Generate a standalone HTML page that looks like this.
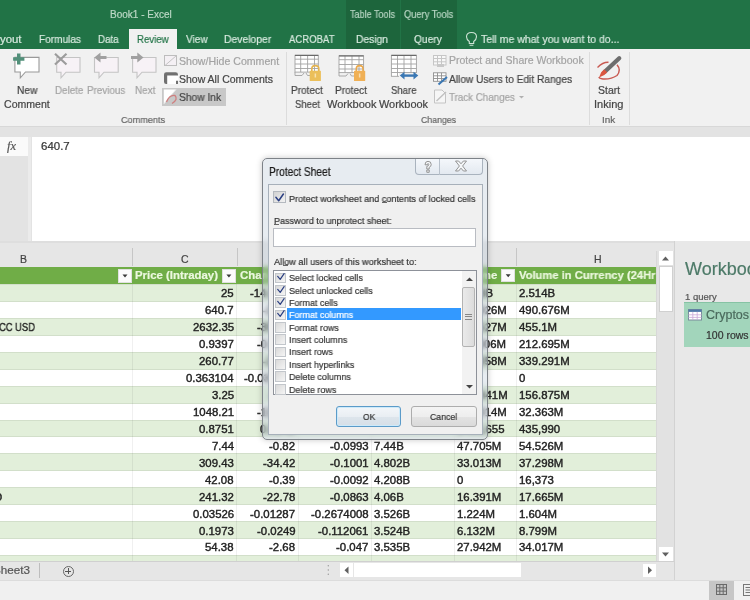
<!DOCTYPE html>
<html><head><meta charset="utf-8">
<style>
*{margin:0;padding:0;box-sizing:border-box}
html,body{width:750px;height:600px;overflow:hidden;background:#f0f0f0;font-family:"Liberation Sans",sans-serif;color:#444;position:relative}
.a{position:absolute;white-space:nowrap;will-change:transform;-webkit-text-stroke-width:0.2px}
.b{position:absolute}
</style></head><body>
<!-- title bar -->
<div class="b" style="left:0;top:0;width:750px;height:49px;background:#217346"></div>
<div class="b" style="left:345.5px;top:0;width:54px;height:49px;background:#1d653c"></div>
<div class="b" style="left:400.5px;top:0;width:56.5px;height:49px;background:#1d653c"></div>
<div class="b" style="left:129px;top:28.8px;width:47.6px;height:20.2px;background:#f1f1f1"></div>
<!-- ribbon -->
<div class="b" style="left:0;top:49px;width:750px;height:78px;background:#f1f1f1;border-bottom:1px solid #d8d8d8"></div>
<div class="b" style="left:285.6px;top:52px;width:1px;height:73px;background:#dcdcdc"></div>
<div class="b" style="left:589.2px;top:52px;width:1px;height:73px;background:#dcdcdc"></div>
<div class="b" style="left:628.7px;top:52px;width:1px;height:73px;background:#dcdcdc"></div>
<div class="b" style="left:162px;top:88px;width:64px;height:17.6px;background:#c8c8c8"></div>

<!-- ribbon icons -->
<svg class="b" style="left:0;top:49px" width="750" height="78" viewBox="0 49 750 78">
 <!-- New Comment -->
 <path d="M14.9 57.4 H39 V72 H25.5 L20.3 77.8 V72 H14.9 Z" fill="#fff" stroke="#9a9a9a" stroke-width="1.1"/>
 <path d="M17 53.5 H20.5 V57.3 H24.4 V60.7 H20.5 V64.5 H17 V60.7 H13.1 V57.3 H17 Z" fill="#52907a"/>
 <!-- Delete -->
 <path d="M56.7 57.5 H80 V72.2 H66 L61 77.8 V72.2 H56.7 Z" fill="#f7f2f6" stroke="#c4c4c4" stroke-width="1.1"/>
 <path d="M55 53.8 L66.5 64.5 M66.5 53.8 L55 64.5" stroke="#9c9c9c" stroke-width="2.2"/>
 <!-- Previous -->
 <path d="M94.5 57.5 H118.2 V72.2 H104 L99 77.8 V72.2 H94.5 Z" fill="#f7f2f6" stroke="#c4c4c4" stroke-width="1.1"/>
 <path d="M106.5 57.5 H99" stroke="#a0a0a0" stroke-width="3"/><path d="M94.3 57.5 L100.5 52.6 V62.4 Z" fill="#a0a0a0"/>
 <!-- Next -->
 <path d="M132.6 57.5 H156 V72.2 H142 L137 77.8 V72.2 H132.6 Z" fill="#f7f2f6" stroke="#c4c4c4" stroke-width="1.1"/>
 <path d="M131 57.5 H138.5" stroke="#a0a0a0" stroke-width="3"/><path d="M143.5 57.5 L137.3 52.6 V62.4 Z" fill="#a0a0a0"/>
 <!-- Show/Hide -->
 <rect x="164.5" y="55.5" width="12" height="10" fill="#f4f0f4" stroke="#bdbdbd" stroke-width="1"/>
 <path d="M165 65.5 L176.5 55.5" stroke="#c4c4c4" stroke-width="1"/>
 <!-- Show All -->
 <path d="M164 74.5 Q164 72.3 166.2 72.3 H175.5 Q178 72.3 178 74.5 V84 H166.2 Q164 84 164 81.8 Z" fill="#707070"/>
 <path d="M167.2 75.6 H178.5 V80.8 H176 V84 H167.2 Z" fill="#fff"/>
 <!-- Show Ink -->
 <path d="M163.8 89.5 H176 L163.8 104 Z" fill="#fff"/>
 <path d="M163.8 104 L176 89.5" stroke="#e6e6e6" stroke-width="1"/>
 <path d="M166.5 102 Q169.5 94.5 175 95.5 Q178.5 99.5 172 103.5" fill="none" stroke="#cf7f7f" stroke-width="1.3"/>
 <!-- Protect Sheet grid -->
 <g fill="none" stroke="#a2a2a2" stroke-width="0.9">
  <rect x="295" y="55.3" width="23.3" height="16.8" fill="#fff"/>
  <path d="M300.7 55.3 V72 M307.6 55.3 V72 M314.5 55.3 V72 M295 59.2 H318.3 M295 64 H318.3 M295 68.5 H318.3"/>
  <path d="M295 72 V75.5 H302 L304 73 M306 73 L307.5 75.5 H312"/>
 </g>
 <rect x="295" y="54.8" width="23.3" height="1.2" fill="#6a6a6a"/>
 <path d="M311.8 71 V68.8 Q311.8 65.6 315.3 65.6 Q318.8 65.6 318.8 68.8 V71" fill="none" stroke="#e4b34f" stroke-width="1.6"/>
 <rect x="309.7" y="70.8" width="11.2" height="10.2" rx="0.6" fill="#ebbf5a"/>
 <rect x="314.6" y="73.5" width="1.5" height="4" fill="#f7e2b0"/>
 <!-- Protect Workbook grid -->
 <g fill="none" stroke="#a2a2a2" stroke-width="0.9">
  <rect x="339" y="55.8" width="24.6" height="16.8" fill="#fff"/>
  <path d="M345 55.8 V72.6 M352 55.8 V72.6 M359 55.8 V72.6 M339 59.7 H363.6 M339 64.5 H363.6 M339 69 H363.6"/>
  <path d="M339 72.6 V76 H346 L348 73.5 M350 73.5 L351.5 76 H354"/>
 </g>
 <rect x="339" y="55.3" width="24.6" height="1.2" fill="#6a6a6a"/>
 <path d="M356.3 71 V68.8 Q356.3 65.6 359.6 65.6 Q363 65.6 363 68.8 V71" fill="none" stroke="#eba84a" stroke-width="1.6"/>
 <rect x="354" y="70.8" width="11.2" height="10.2" rx="0.6" fill="#f0b055"/>
 <rect x="358.9" y="73.5" width="1.5" height="4" fill="#f8dcae"/>
 <!-- Share Workbook -->
 <g fill="none" stroke="#a2a2a2" stroke-width="0.9">
  <rect x="391.4" y="55.3" width="25" height="21" fill="#fff"/>
  <path d="M397.5 55.3 V76.3 M404 55.3 V76.3 M411 55.3 V76.3 M391.4 59.2 H416.4 M391.4 64 H416.4 M391.4 68.5 H416.4 M391.4 72.5 H416.4"/>
 </g>
 <rect x="391.4" y="54.8" width="25" height="1.2" fill="#6a6a6a"/>
 <rect x="399" y="73" width="20" height="6" fill="#f1f1f1"/>
 <path d="M402.5 75.6 H415.5" stroke="#3b78b4" stroke-width="2.4"/>
 <path d="M399.8 75.6 L404.5 71.8 V79.4 Z M418.3 75.6 L413.5 71.8 V79.4 Z" fill="#3b78b4"/>
 <!-- Protect and Share (disabled) -->
 <g fill="none" stroke="#c6c6c6" stroke-width="1">
  <rect x="433.5" y="55.5" width="12.5" height="9.5" fill="#f8f8f8"/>
  <path d="M437.5 55.5 V65 M441.5 55.5 V65 M433.5 58.5 H446 M433.5 61.8 H446"/>
 </g>
 <rect x="437" y="64" width="7" height="3" fill="#c8c8c8"/>
 <!-- Allow Users -->
 <g fill="none" stroke="#909090" stroke-width="0.9">
  <rect x="433.5" y="72.8" width="12.5" height="8.5" fill="#fff"/>
  <path d="M437.5 72.8 V81.3 M441.5 72.8 V81.3 M433.5 75.8 H446 M433.5 78.5 H446"/>
 </g>
 <path d="M438.5 84.5 L447 77" stroke="#3b78b4" stroke-width="2"/>
 <!-- Track Changes (disabled) -->
 <path d="M434.5 90 H442 L445.5 93.5 V103 H434.5 Z" fill="#f6f6f6" stroke="#c4c4c4" stroke-width="1"/>
 <path d="M436.5 101 L446 92" stroke="#c0c0c0" stroke-width="1.4"/>
 <path d="M519 96 L524 96 L521.5 98.5 Z" fill="#b0b0b0"/>
 <!-- Start Inking -->
 <path d="M597.5 67.5 Q603 62 608.5 62.3 M617 64.8 Q621.5 70 617 75.5 Q611 79.5 603 79 Q599 78.5 599 77" fill="none" stroke="#c85a52" stroke-width="1.4"/>
 <path d="M604.5 72 L619.2 58.2" stroke="#6e6e6e" stroke-width="4.3" stroke-linecap="round"/>
 <path d="M599 77.5 L601.2 72.2 L604.3 69.3 L607.2 72.2 L604.3 75 Z" fill="#da5640"/>
</svg>
<!-- tell me bulb -->
<svg class="b" style="left:465px;top:31px" width="13" height="16" viewBox="0 0 13 16"><path d="M4.3 10.5 Q1.5 8.5 1.5 5.8 Q1.5 1.5 6.5 1.5 Q11.5 1.5 11.5 5.8 Q11.5 8.5 8.7 10.5 V12.5 H4.3 Z M4.6 14.2 H8.4" fill="none" stroke="#cfe4d6" stroke-width="1.1"/></svg>
<!-- band + formula bar -->
<div class="b" style="left:0;top:127px;width:750px;height:114px;background:#e3e3e3"></div>
<div class="b" style="left:0;top:137px;width:28px;height:19px;background:#fafafa"></div>
<div class="b" style="left:28px;top:137px;width:3px;height:104px;background:#ebebeb"></div>
<div class="b" style="left:32px;top:137px;width:718px;height:104px;background:#fff"></div>
<!-- grid area -->
<div class="b" style="left:0;top:241px;width:750px;height:339px;background:#e6e6e6"></div>
<div class="b" style="left:0;top:241px;width:674px;height:2px;background:#dedede"></div>
<div class="b" style="left:132.4px;top:248px;width:1px;height:18px;background:#c6c6c6"></div>
<div class="b" style="left:236.6px;top:248px;width:1px;height:18px;background:#c6c6c6"></div>
<div class="b" style="left:516px;top:248px;width:1px;height:18px;background:#c6c6c6"></div>
<!-- table -->
<div id="tbl" class="b" style="left:0;top:266.5px;width:656.4px;height:294.5px;overflow:hidden;background:#fff">
<div class="b" style="left:0;top:0;width:656.4px;height:17.5px;background:#70ad47"></div>
<div class="b" style="left:0;top:17.50px;width:656.4px;height:16.94px;background:#e2efda;border-top:1px solid #d2dfca"></div>
<div class="b" style="left:0;top:34.44px;width:656.4px;height:16.94px;background:#ffffff;border-top:1px solid #d2dfca"></div>
<div class="b" style="left:0;top:51.38px;width:656.4px;height:16.94px;background:#e2efda;border-top:1px solid #d2dfca"></div>
<div class="b" style="left:0;top:68.32px;width:656.4px;height:16.94px;background:#ffffff;border-top:1px solid #d2dfca"></div>
<div class="b" style="left:0;top:85.26px;width:656.4px;height:16.94px;background:#e2efda;border-top:1px solid #d2dfca"></div>
<div class="b" style="left:0;top:102.20px;width:656.4px;height:16.94px;background:#ffffff;border-top:1px solid #d2dfca"></div>
<div class="b" style="left:0;top:119.14px;width:656.4px;height:16.94px;background:#e2efda;border-top:1px solid #d2dfca"></div>
<div class="b" style="left:0;top:136.08px;width:656.4px;height:16.94px;background:#ffffff;border-top:1px solid #d2dfca"></div>
<div class="b" style="left:0;top:153.02px;width:656.4px;height:16.94px;background:#e2efda;border-top:1px solid #d2dfca"></div>
<div class="b" style="left:0;top:169.96px;width:656.4px;height:16.94px;background:#ffffff;border-top:1px solid #d2dfca"></div>
<div class="b" style="left:0;top:186.90px;width:656.4px;height:16.94px;background:#e2efda;border-top:1px solid #d2dfca"></div>
<div class="b" style="left:0;top:203.84px;width:656.4px;height:16.94px;background:#ffffff;border-top:1px solid #d2dfca"></div>
<div class="b" style="left:0;top:220.78px;width:656.4px;height:16.94px;background:#e2efda;border-top:1px solid #d2dfca"></div>
<div class="b" style="left:0;top:237.72px;width:656.4px;height:16.94px;background:#ffffff;border-top:1px solid #d2dfca"></div>
<div class="b" style="left:0;top:254.66px;width:656.4px;height:16.94px;background:#e2efda;border-top:1px solid #d2dfca"></div>
<div class="b" style="left:0;top:271.60px;width:656.4px;height:16.94px;background:#ffffff;border-top:1px solid #d2dfca"></div>
<div class="b" style="left:0;top:288.54px;width:656.4px;height:16.94px;background:#e2efda;border-top:1px solid #d2dfca"></div>
<div class="b" style="left:132.1px;top:17.5px;width:1px;height:280px;background:rgba(0,0,0,0.06)"></div>
<div class="b" style="left:236.3px;top:17.5px;width:1px;height:280px;background:rgba(0,0,0,0.06)"></div>
<div class="b" style="left:297.5px;top:17.5px;width:1px;height:280px;background:rgba(0,0,0,0.06)"></div>
<div class="b" style="left:371.1px;top:17.5px;width:1px;height:280px;background:rgba(0,0,0,0.06)"></div>
<div class="b" style="left:453.9px;top:17.5px;width:1px;height:280px;background:rgba(0,0,0,0.06)"></div>
<div class="b" style="left:515.7px;top:17.5px;width:1px;height:280px;background:rgba(0,0,0,0.06)"></div>
</div>
<!-- vertical scrollbar -->
<div class="b" style="left:656.4px;top:251px;width:17.3px;height:310px;background:#e2e2e2;border-left:1px solid #d8d8d8"></div>
<div class="b" style="left:658.5px;top:251px;width:14px;height:14px;background:#fff"></div>
<div class="b" style="left:658.5px;top:265.5px;width:14px;height:46.5px;background:#fff;border:1px solid #d0d0d0"></div>
<div class="b" style="left:658.5px;top:547.3px;width:14px;height:14px;background:#fff"></div>
<!-- pane -->
<div class="b" style="left:673.7px;top:241px;width:1px;height:339px;background:#d2d2d2"></div>
<div class="b" style="left:674.7px;top:241px;width:76px;height:339px;background:#e8e8e8"></div>
<div class="b" style="left:684.4px;top:302.4px;width:70px;height:44.6px;background:#a2d5bb;border-top:1px solid #86c3a4"></div>
<!-- sheet tab bar -->
<div class="b" style="left:0;top:561px;width:673.7px;height:19px;background:#e6e6e6;border-top:1px solid #d0d0d0"></div>
<div class="b" style="left:38.5px;top:563px;width:1px;height:15px;background:#bdbdbd"></div>
<div class="b" style="left:62.8px;top:565.5px;width:11px;height:11px;border:1px solid #666;border-radius:50%"></div>
<div class="b" style="left:65.3px;top:570.5px;width:6px;height:1px;background:#555"></div>
<div class="b" style="left:67.8px;top:568px;width:1px;height:6px;background:#555"></div>
<div class="b" style="left:339.7px;top:563.4px;width:13.6px;height:13.6px;background:#fff"></div>
<div class="b" style="left:354.4px;top:563.4px;width:166.6px;height:13.6px;background:#fff"></div>
<div class="b" style="left:643.4px;top:563.8px;width:13px;height:13px;background:#fff"></div>
<!-- status bar -->
<div class="b" style="left:0;top:580px;width:750px;height:20px;background:#f0f0f0;border-top:1px solid #dcdcdc"></div>
<div class="b" style="left:709.3px;top:581px;width:25px;height:19px;background:#c6c6c6"></div>

<!-- header dropdowns -->
<div class="b" style="left:118.1px;top:268.9px;width:13.8px;height:14.4px;background:#fbfbfb;border:1px solid #e0e0e0"></div>
<div class="b" style="left:222px;top:268.9px;width:13.8px;height:14.4px;background:#fbfbfb;border:1px solid #e0e0e0"></div>
<div class="b" style="left:501.3px;top:268.7px;width:13.7px;height:13.6px;background:#fbfbfb;border:1px solid #e0e0e0"></div>
<svg class="b" style="left:0;top:0" width="750" height="600">
 <path d="M122.5 274.5 H127.5 L125 277.5 Z M226.4 274.5 H231.4 L228.9 277.5 Z M505.7 274.3 H510.7 L508.2 277.3 Z" fill="#3a3a3a"/>
 <path d="M662 260.5 L665.5 256.5 L669 260.5 Z" fill="#606060"/>
 <path d="M662 552.5 L665.5 556.5 L669 552.5 Z" fill="#606060"/>
 <path d="M348.5 566.5 L344.5 570.2 L348.5 574 Z" fill="#606060"/>
 <path d="M648 566.5 L652 570.2 L648 574 Z" fill="#606060"/>
 <circle cx="328.3" cy="565.8" r="0.7" fill="#999"/><circle cx="328.3" cy="570" r="0.7" fill="#999"/><circle cx="328.3" cy="574.2" r="0.7" fill="#999"/>
 <!-- normal view grid icon -->
 <g stroke="#6a6a6a" stroke-width="1" fill="none"><rect x="716.5" y="584.5" width="10" height="10"/><path d="M719.8 584.5 V594.5 M723.2 584.5 V594.5 M716.5 587.8 H726.5 M716.5 591.2 H726.5"/></g>
 <!-- page layout icon -->
 <g stroke="#777" stroke-width="1" fill="none"><rect x="743.5" y="584.5" width="9" height="11"/><path d="M745.5 587.5 H750 M745.5 590 H750 M745.5 592.5 H750"/></g>
 <!-- table icon in query card -->
 <rect x="688.5" y="309.5" width="13" height="10.5" fill="#fff" stroke="#7a8c9c" stroke-width="1"/>
 <rect x="688.5" y="309.5" width="13" height="2.4" fill="#4f78a8"/>
 <path d="M688.5 314.8 H701.5 M688.5 317.4 H701.5 M692.8 311.9 V320 M697.2 311.9 V320" stroke="#c9a8d8" stroke-width="0.8"/>
</svg>
<div class="a" style="left:7px;top:139px;font-family:'Liberation Serif',serif;font-style:italic;font-size:12.5px;line-height:14px;color:#555">fx</div>
<div class="a" style="top:9.54px;font-size:10px;line-height:10px;color:#bcd8c6;left:110.00px;">Book1 - Excel</div>
<div class="a" style="top:33.89px;font-size:11px;line-height:11px;color:#d8eadf;left:-0.50px;transform:scaleX(1.0338);transform-origin:0 0;">yout</div>
<div class="a" style="top:33.89px;font-size:11px;line-height:11px;color:#d8eadf;left:38.50px;transform:scaleX(0.9162);transform-origin:0 0;">Formulas</div>
<div class="a" style="top:33.89px;font-size:11px;line-height:11px;color:#d8eadf;left:98.30px;transform:scaleX(0.8903);transform-origin:0 0;">Data</div>
<div class="a" style="top:33.89px;font-size:11px;line-height:11px;color:#217346;left:136.80px;transform:scaleX(0.8786);transform-origin:0 0;">Review</div>
<div class="a" style="top:33.89px;font-size:11px;line-height:11px;color:#d8eadf;left:185.60px;transform:scaleX(0.9173);transform-origin:0 0;">View</div>
<div class="a" style="top:33.89px;font-size:11px;line-height:11px;color:#d8eadf;left:224.30px;transform:scaleX(0.9433);transform-origin:0 0;">Developer</div>
<div class="a" style="top:33.89px;font-size:11px;line-height:11px;color:#d8eadf;left:288.90px;transform:scaleX(0.8690);transform-origin:0 0;">ACROBAT</div>
<div class="a" style="top:33.89px;font-size:11px;line-height:11px;color:#d8eadf;left:355.90px;transform:scaleX(0.9343);transform-origin:0 0;">Design</div>
<div class="a" style="top:33.89px;font-size:11px;line-height:11px;color:#d8eadf;left:414.20px;transform:scaleX(0.9276);transform-origin:0 0;">Query</div>
<div class="a" style="top:33.89px;font-size:11px;line-height:11px;color:#d8eadf;left:480.80px;transform:scaleX(0.9557);transform-origin:0 0;">Tell me what you want to do...</div>
<div class="a" style="top:9.87px;font-size:10.2px;line-height:10.2px;color:#b9d6c4;left:349.50px;transform:scaleX(0.8862);transform-origin:0 0;">Table Tools</div>
<div class="a" style="top:9.87px;font-size:10.2px;line-height:10.2px;color:#b9d6c4;left:404.20px;transform:scaleX(0.9101);transform-origin:0 0;">Query Tools</div>
<div class="a" style="top:84.71px;font-size:10.5px;line-height:10.5px;color:#444;left:16.70px;transform:scaleX(0.9707);transform-origin:0 0;">New</div>
<div class="a" style="top:98.81px;font-size:10.5px;line-height:10.5px;color:#444;left:3.80px;transform:scaleX(1.0062);transform-origin:0 0;">Comment</div>
<div class="a" style="top:84.71px;font-size:10.5px;line-height:10.5px;color:#a3a3a3;left:54.50px;transform:scaleX(0.9355);transform-origin:0 0;">Delete</div>
<div class="a" style="top:84.71px;font-size:10.5px;line-height:10.5px;color:#a3a3a3;left:87.00px;transform:scaleX(0.9374);transform-origin:0 0;">Previous</div>
<div class="a" style="top:84.71px;font-size:10.5px;line-height:10.5px;color:#a3a3a3;left:134.60px;transform:scaleX(0.9401);transform-origin:0 0;">Next</div>
<div class="a" style="top:115.00px;font-size:9.8px;line-height:9.8px;color:#666;left:120.80px;transform:scaleX(0.9309);transform-origin:0 0;">Comments</div>
<div class="a" style="top:55.51px;font-size:10.5px;line-height:10.5px;color:#a3a3a3;left:179.40px;transform:scaleX(1.0099);transform-origin:0 0;">Show/Hide Comment</div>
<div class="a" style="top:74.11px;font-size:10.5px;line-height:10.5px;color:#444;left:179.40px;">Show All Comments</div>
<div class="a" style="top:91.91px;font-size:10.5px;line-height:10.5px;color:#444;left:179.40px;transform:scaleX(0.9745);transform-origin:0 0;">Show Ink</div>
<div class="a" style="top:85.01px;font-size:10.5px;line-height:10.5px;color:#444;left:290.70px;transform:scaleX(0.9589);transform-origin:0 0;">Protect</div>
<div class="a" style="top:98.71px;font-size:10.5px;line-height:10.5px;color:#444;left:294.50px;transform:scaleX(0.9070);transform-origin:0 0;">Sheet</div>
<div class="a" style="top:85.01px;font-size:10.5px;line-height:10.5px;color:#444;left:335.40px;transform:scaleX(0.9620);transform-origin:0 0;">Protect</div>
<div class="a" style="top:98.71px;font-size:10.5px;line-height:10.5px;color:#444;left:326.50px;transform:scaleX(1.0514);transform-origin:0 0;">Workbook</div>
<div class="a" style="top:85.01px;font-size:10.5px;line-height:10.5px;color:#444;left:391.00px;transform:scaleX(0.9097);transform-origin:0 0;">Share</div>
<div class="a" style="top:98.71px;font-size:10.5px;line-height:10.5px;color:#444;left:379.00px;transform:scaleX(1.0408);transform-origin:0 0;">Workbook</div>
<div class="a" style="top:55.31px;font-size:10.5px;line-height:10.5px;color:#a3a3a3;left:448.50px;">Protect and Share Workbook</div>
<div class="a" style="top:74.11px;font-size:10.5px;line-height:10.5px;color:#444;left:448.50px;transform:scaleX(0.9675);transform-origin:0 0;">Allow Users to Edit Ranges</div>
<div class="a" style="top:92.11px;font-size:10.5px;line-height:10.5px;color:#a3a3a3;left:448.50px;transform:scaleX(0.9306);transform-origin:0 0;">Track Changes</div>
<div class="a" style="top:115.00px;font-size:9.8px;line-height:9.8px;color:#666;left:420.70px;transform:scaleX(0.8950);transform-origin:0 0;">Changes</div>
<div class="a" style="top:85.01px;font-size:10.5px;line-height:10.5px;color:#444;left:598.00px;transform:scaleX(0.9915);transform-origin:0 0;">Start</div>
<div class="a" style="top:98.71px;font-size:10.5px;line-height:10.5px;color:#444;left:594.00px;transform:scaleX(1.0524);transform-origin:0 0;">Inking</div>
<div class="a" style="top:115.00px;font-size:9.8px;line-height:9.8px;color:#666;left:602.40px;transform:scaleX(1.0093);transform-origin:0 0;">Ink</div>
<div class="a" style="top:141.31px;font-size:10.5px;line-height:10.5px;color:#333;left:41.30px;transform:scaleX(1.0920);transform-origin:0 0;">640.7</div>
<div class="a" style="top:254.11px;font-size:10.5px;line-height:10.5px;color:#444;left:19.50px;">B</div>
<div class="a" style="top:254.11px;font-size:10.5px;line-height:10.5px;color:#444;left:180.50px;">C</div>
<div class="a" style="top:254.11px;font-size:10.5px;line-height:10.5px;color:#444;left:594.40px;">H</div>
<div class="a" style="top:270.35px;font-size:11.4px;line-height:11.4px;color:#ecf8df;font-weight:bold;left:135.00px;">Price (Intraday)</div>
<div class="a" style="top:270.35px;font-size:11.4px;line-height:11.4px;color:#ecf8df;font-weight:bold;left:239.50px;">Chan</div>
<div class="a" style="top:270.35px;font-size:11.4px;line-height:11.4px;color:#ecf8df;font-weight:bold;left:457.20px;">Volume</div>
<div class="a" style="top:270.35px;font-size:11.4px;line-height:11.4px;color:#ecf8df;font-weight:bold;left:519.00px;transform:scaleX(0.9817);transform-origin:0 0;">Volume in Currency (24Hr</div>
<div class="a" style="top:288.35px;font-size:11.4px;line-height:11.4px;color:#222;left:221.33px;-webkit-text-stroke:0.4px #222;">25</div>
<div class="a" style="top:288.35px;font-size:11.4px;line-height:11.4px;color:#222;left:250.23px;-webkit-text-stroke:0.4px #222;">-14.0931</div>
<div class="a" style="top:288.35px;font-size:11.4px;line-height:11.4px;color:#222;left:457.20px;-webkit-text-stroke:0.4px #222;">2.533B</div>
<div class="a" style="top:288.35px;font-size:11.4px;line-height:11.4px;color:#222;left:519.00px;-webkit-text-stroke:0.4px #222;">2.514B</div>
<div class="a" style="top:305.29px;font-size:11.4px;line-height:11.4px;color:#222;left:205.48px;-webkit-text-stroke:0.4px #222;">640.7</div>
<div class="a" style="top:305.29px;font-size:11.4px;line-height:11.4px;color:#222;left:262.89px;-webkit-text-stroke:0.4px #222;">-22.12</div>
<div class="a" style="top:305.29px;font-size:11.4px;line-height:11.4px;color:#222;left:457.20px;-webkit-text-stroke:0.4px #222;">114.926M</div>
<div class="a" style="top:305.29px;font-size:11.4px;line-height:11.4px;color:#222;left:519.00px;-webkit-text-stroke:0.4px #222;">490.676M</div>
<div class="a" style="top:322.23px;font-size:11.4px;line-height:11.4px;color:#222;left:-1.00px;transform:scaleX(0.8243);transform-origin:0 0;-webkit-text-stroke:0.4px #222;">CC USD</div>
<div class="a" style="top:322.23px;font-size:11.4px;line-height:11.4px;color:#222;left:192.81px;-webkit-text-stroke:0.4px #222;">2632.35</div>
<div class="a" style="top:322.23px;font-size:11.4px;line-height:11.4px;color:#222;left:256.56px;-webkit-text-stroke:0.4px #222;">-359.02</div>
<div class="a" style="top:322.23px;font-size:11.4px;line-height:11.4px;color:#222;left:457.20px;-webkit-text-stroke:0.4px #222;">119.527M</div>
<div class="a" style="top:322.23px;font-size:11.4px;line-height:11.4px;color:#222;left:519.00px;-webkit-text-stroke:0.4px #222;">455.1M</div>
<div class="a" style="top:339.17px;font-size:11.4px;line-height:11.4px;color:#222;left:199.16px;-webkit-text-stroke:0.4px #222;">0.9397</div>
<div class="a" style="top:339.17px;font-size:11.4px;line-height:11.4px;color:#222;left:256.56px;-webkit-text-stroke:0.4px #222;">-0.0933</div>
<div class="a" style="top:339.17px;font-size:11.4px;line-height:11.4px;color:#222;left:457.20px;-webkit-text-stroke:0.4px #222;">111.306M</div>
<div class="a" style="top:339.17px;font-size:11.4px;line-height:11.4px;color:#222;left:519.00px;-webkit-text-stroke:0.4px #222;">212.695M</div>
<div class="a" style="top:356.11px;font-size:11.4px;line-height:11.4px;color:#222;left:199.16px;-webkit-text-stroke:0.4px #222;">260.77</div>
<div class="a" style="top:356.11px;font-size:11.4px;line-height:11.4px;color:#222;left:262.89px;-webkit-text-stroke:0.4px #222;">-29.12</div>
<div class="a" style="top:356.11px;font-size:11.4px;line-height:11.4px;color:#222;left:457.20px;-webkit-text-stroke:0.4px #222;">112.358M</div>
<div class="a" style="top:356.11px;font-size:11.4px;line-height:11.4px;color:#222;left:519.00px;-webkit-text-stroke:0.4px #222;">339.291M</div>
<div class="a" style="top:373.05px;font-size:11.4px;line-height:11.4px;color:#222;left:186.48px;-webkit-text-stroke:0.4px #222;">0.363104</div>
<div class="a" style="top:373.05px;font-size:11.4px;line-height:11.4px;color:#222;left:243.89px;-webkit-text-stroke:0.4px #222;">-0.034612</div>
<div class="a" style="top:373.05px;font-size:11.4px;line-height:11.4px;color:#222;left:457.20px;-webkit-text-stroke:0.4px #222;">0</div>
<div class="a" style="top:373.05px;font-size:11.4px;line-height:11.4px;color:#222;left:519.00px;-webkit-text-stroke:0.4px #222;">0</div>
<div class="a" style="top:389.99px;font-size:11.4px;line-height:11.4px;color:#222;left:211.83px;-webkit-text-stroke:0.4px #222;">3.25</div>
<div class="a" style="top:389.99px;font-size:11.4px;line-height:11.4px;color:#222;left:269.23px;-webkit-text-stroke:0.4px #222;">-0.06</div>
<div class="a" style="top:389.99px;font-size:11.4px;line-height:11.4px;color:#222;left:457.20px;-webkit-text-stroke:0.4px #222;">123.441M</div>
<div class="a" style="top:389.99px;font-size:11.4px;line-height:11.4px;color:#222;left:519.00px;-webkit-text-stroke:0.4px #222;">156.875M</div>
<div class="a" style="top:406.93px;font-size:11.4px;line-height:11.4px;color:#222;left:192.81px;-webkit-text-stroke:0.4px #222;">1048.21</div>
<div class="a" style="top:406.93px;font-size:11.4px;line-height:11.4px;color:#222;left:257.40px;-webkit-text-stroke:0.4px #222;">-112.13</div>
<div class="a" style="top:406.93px;font-size:11.4px;line-height:11.4px;color:#222;left:457.20px;-webkit-text-stroke:0.4px #222;">114.314M</div>
<div class="a" style="top:406.93px;font-size:11.4px;line-height:11.4px;color:#222;left:519.00px;-webkit-text-stroke:0.4px #222;">32.363M</div>
<div class="a" style="top:423.87px;font-size:11.4px;line-height:11.4px;color:#222;left:199.16px;-webkit-text-stroke:0.4px #222;">0.8751</div>
<div class="a" style="top:423.87px;font-size:11.4px;line-height:11.4px;color:#222;left:260.36px;-webkit-text-stroke:0.4px #222;">0.0142</div>
<div class="a" style="top:423.87px;font-size:11.4px;line-height:11.4px;color:#222;left:457.20px;-webkit-text-stroke:0.4px #222;">1435,655</div>
<div class="a" style="top:423.87px;font-size:11.4px;line-height:11.4px;color:#222;left:519.00px;-webkit-text-stroke:0.4px #222;">435,990</div>
<div class="a" style="top:440.81px;font-size:11.4px;line-height:11.4px;color:#222;left:211.83px;-webkit-text-stroke:0.4px #222;">7.44</div>
<div class="a" style="top:440.81px;font-size:11.4px;line-height:11.4px;color:#222;left:269.23px;-webkit-text-stroke:0.4px #222;">-0.82</div>
<div class="a" style="top:440.81px;font-size:11.4px;line-height:11.4px;color:#222;left:330.16px;-webkit-text-stroke:0.4px #222;">-0.0993</div>
<div class="a" style="top:440.81px;font-size:11.4px;line-height:11.4px;color:#222;left:374.40px;-webkit-text-stroke:0.4px #222;">7.44B</div>
<div class="a" style="top:440.81px;font-size:11.4px;line-height:11.4px;color:#222;left:457.20px;-webkit-text-stroke:0.4px #222;">47.705M</div>
<div class="a" style="top:440.81px;font-size:11.4px;line-height:11.4px;color:#222;left:519.00px;-webkit-text-stroke:0.4px #222;">54.526M</div>
<div class="a" style="top:457.75px;font-size:11.4px;line-height:11.4px;color:#222;left:199.16px;-webkit-text-stroke:0.4px #222;">309.43</div>
<div class="a" style="top:457.75px;font-size:11.4px;line-height:11.4px;color:#222;left:262.89px;-webkit-text-stroke:0.4px #222;">-34.42</div>
<div class="a" style="top:457.75px;font-size:11.4px;line-height:11.4px;color:#222;left:330.16px;-webkit-text-stroke:0.4px #222;">-0.1001</div>
<div class="a" style="top:457.75px;font-size:11.4px;line-height:11.4px;color:#222;left:374.40px;-webkit-text-stroke:0.4px #222;">4.802B</div>
<div class="a" style="top:457.75px;font-size:11.4px;line-height:11.4px;color:#222;left:457.20px;-webkit-text-stroke:0.4px #222;">33.013M</div>
<div class="a" style="top:457.75px;font-size:11.4px;line-height:11.4px;color:#222;left:519.00px;-webkit-text-stroke:0.4px #222;">37.298M</div>
<div class="a" style="top:474.69px;font-size:11.4px;line-height:11.4px;color:#222;left:205.48px;-webkit-text-stroke:0.4px #222;">42.08</div>
<div class="a" style="top:474.69px;font-size:11.4px;line-height:11.4px;color:#222;left:269.23px;-webkit-text-stroke:0.4px #222;">-0.39</div>
<div class="a" style="top:474.69px;font-size:11.4px;line-height:11.4px;color:#222;left:330.16px;-webkit-text-stroke:0.4px #222;">-0.0092</div>
<div class="a" style="top:474.69px;font-size:11.4px;line-height:11.4px;color:#222;left:374.40px;-webkit-text-stroke:0.4px #222;">4.208B</div>
<div class="a" style="top:474.69px;font-size:11.4px;line-height:11.4px;color:#222;left:457.20px;-webkit-text-stroke:0.4px #222;">0</div>
<div class="a" style="top:474.69px;font-size:11.4px;line-height:11.4px;color:#222;left:519.00px;-webkit-text-stroke:0.4px #222;">16,373</div>
<div class="a" style="top:491.63px;font-size:11.4px;line-height:11.4px;color:#222;left:-6.00px;-webkit-text-stroke:0.4px #222;">D</div>
<div class="a" style="top:491.63px;font-size:11.4px;line-height:11.4px;color:#222;left:199.16px;-webkit-text-stroke:0.4px #222;">241.32</div>
<div class="a" style="top:491.63px;font-size:11.4px;line-height:11.4px;color:#222;left:262.89px;-webkit-text-stroke:0.4px #222;">-22.78</div>
<div class="a" style="top:491.63px;font-size:11.4px;line-height:11.4px;color:#222;left:330.16px;-webkit-text-stroke:0.4px #222;">-0.0863</div>
<div class="a" style="top:491.63px;font-size:11.4px;line-height:11.4px;color:#222;left:374.40px;-webkit-text-stroke:0.4px #222;">4.06B</div>
<div class="a" style="top:491.63px;font-size:11.4px;line-height:11.4px;color:#222;left:457.20px;-webkit-text-stroke:0.4px #222;">16.391M</div>
<div class="a" style="top:491.63px;font-size:11.4px;line-height:11.4px;color:#222;left:519.00px;-webkit-text-stroke:0.4px #222;">17.665M</div>
<div class="a" style="top:508.57px;font-size:11.4px;line-height:11.4px;color:#222;left:192.81px;-webkit-text-stroke:0.4px #222;">0.03526</div>
<div class="a" style="top:508.57px;font-size:11.4px;line-height:11.4px;color:#222;left:250.23px;-webkit-text-stroke:0.4px #222;">-0.01287</div>
<div class="a" style="top:508.57px;font-size:11.4px;line-height:11.4px;color:#222;left:311.16px;-webkit-text-stroke:0.4px #222;">-0.2674008</div>
<div class="a" style="top:508.57px;font-size:11.4px;line-height:11.4px;color:#222;left:374.40px;-webkit-text-stroke:0.4px #222;">3.526B</div>
<div class="a" style="top:508.57px;font-size:11.4px;line-height:11.4px;color:#222;left:457.20px;-webkit-text-stroke:0.4px #222;">1.224M</div>
<div class="a" style="top:508.57px;font-size:11.4px;line-height:11.4px;color:#222;left:519.00px;-webkit-text-stroke:0.4px #222;">1.604M</div>
<div class="a" style="top:525.51px;font-size:11.4px;line-height:11.4px;color:#222;left:199.16px;-webkit-text-stroke:0.4px #222;">0.1973</div>
<div class="a" style="top:525.51px;font-size:11.4px;line-height:11.4px;color:#222;left:256.56px;-webkit-text-stroke:0.4px #222;">-0.0249</div>
<div class="a" style="top:525.51px;font-size:11.4px;line-height:11.4px;color:#222;left:318.33px;-webkit-text-stroke:0.4px #222;">-0.112061</div>
<div class="a" style="top:525.51px;font-size:11.4px;line-height:11.4px;color:#222;left:374.40px;-webkit-text-stroke:0.4px #222;">3.524B</div>
<div class="a" style="top:525.51px;font-size:11.4px;line-height:11.4px;color:#222;left:457.20px;-webkit-text-stroke:0.4px #222;">6.132M</div>
<div class="a" style="top:525.51px;font-size:11.4px;line-height:11.4px;color:#222;left:519.00px;-webkit-text-stroke:0.4px #222;">8.799M</div>
<div class="a" style="top:542.45px;font-size:11.4px;line-height:11.4px;color:#222;left:205.48px;-webkit-text-stroke:0.4px #222;">54.38</div>
<div class="a" style="top:542.45px;font-size:11.4px;line-height:11.4px;color:#222;left:269.23px;-webkit-text-stroke:0.4px #222;">-2.68</div>
<div class="a" style="top:542.45px;font-size:11.4px;line-height:11.4px;color:#222;left:336.49px;-webkit-text-stroke:0.4px #222;">-0.047</div>
<div class="a" style="top:542.45px;font-size:11.4px;line-height:11.4px;color:#222;left:374.40px;-webkit-text-stroke:0.4px #222;">3.535B</div>
<div class="a" style="top:542.45px;font-size:11.4px;line-height:11.4px;color:#222;left:457.20px;-webkit-text-stroke:0.4px #222;">27.942M</div>
<div class="a" style="top:542.45px;font-size:11.4px;line-height:11.4px;color:#222;left:519.00px;-webkit-text-stroke:0.4px #222;">34.017M</div>
<div class="a" style="top:259.76px;font-size:18px;line-height:18px;color:#4d7a68;left:685.00px;">Workbook Queries</div>
<div class="a" style="top:292.26px;font-size:9.5px;line-height:9.5px;color:#555;left:685.00px;">1 query</div>
<div class="a" style="top:309.22px;font-size:12.5px;line-height:12.5px;color:#4a6a5c;left:705.60px;">Cryptos</div>
<div class="a" style="top:330.11px;font-size:10.5px;line-height:10.5px;color:#333;left:706.00px;">100 rows</div>
<div class="a" style="top:564.89px;font-size:11px;line-height:11px;color:#555;left:-7.50px;transform:scaleX(1.0609);transform-origin:0 0;">Sheet3</div>
<!-- dialog -->
<div id="dlg" class="b" style="left:262px;top:158.3px;width:226.3px;height:281.7px;border:1px solid #7d8288;border-radius:5px;background:rgba(180,196,212,0.32);backdrop-filter:blur(2.5px);box-shadow:0 0 6px rgba(0,0,0,0.22)"></div>
<div class="b" style="left:268px;top:183.5px;width:214.5px;height:251px;background:#f0f0f0;border:1px solid #a7b0ba"></div>
<div class="b" style="left:414.50px;top:158.80px;width:68.20px;height:15.90px;background:linear-gradient(#f4f7fb,#e3e9f0);border:1px solid #a9b3be;border-top:none;border-radius:0 0 4px 4px"></div>
<div class="b" style="left:439.20px;top:158.80px;width:1.00px;height:15.90px;background:#b8c1cb"></div>
<svg class="b" style="left:421px;top:160px" width="14" height="14" viewBox="0 0 14 14"><path d="M4 4.8 Q4 1.3 7 1.3 Q10.2 1.3 10.2 4.5 Q10.2 6.6 8.2 7.3 V9 H5.8 V6.4 Q7.8 6 7.8 4.6 Q7.8 3.6 7 3.6 Q6.3 3.6 6.3 4.8 Z M5.8 10 H8.2 V12.3 H5.8 Z" fill="#f4f6f8" stroke="#8a8a8a" stroke-width="0.9"/></svg>
<svg class="b" style="left:454px;top:160px" width="14" height="12" viewBox="0 0 14 12"><path d="M1.5 1 H4.6 L7 3.8 L9.4 1 H12.5 L8.6 6 L12.5 11 H9.4 L7 8.2 L4.6 11 H1.5 L5.4 6 Z" fill="#f4f6f8" stroke="#8a8a8a" stroke-width="0.9" stroke-linejoin="round"/></svg>
<div class="b" style="left:273.30px;top:191.30px;width:12.50px;height:11.70px;background:linear-gradient(135deg,#d2d2d2,#f2f2f2);border:1px solid #b4b9bf"></div>
<svg class="b" style="left:274.3px;top:191.8px" width="11" height="11" viewBox="0 0 11 11"><path d="M1.9 5.3 L4.7 8.7 L9.4 2" fill="none" stroke="#2b3f82" stroke-width="1.5" stroke-linecap="round" stroke-linejoin="round"/></svg>
<div class="b" style="left:273.30px;top:228.00px;width:202.70px;height:19.00px;background:#fff;border:1px solid #b9bcc2"></div>
<div class="b" style="left:273.30px;top:270.30px;width:203.40px;height:124.70px;background:#fff;border:1px solid #8d9199"></div>
<div class="b" style="left:461.70px;top:271.30px;width:14.00px;height:122.70px;background:#f2f2f2"></div>
<div class="b" style="left:462.20px;top:286.70px;width:13.00px;height:60.00px;background:linear-gradient(90deg,#eaeaea,#dcdcdc);border:1px solid #b3b3b3;border-radius:2px"></div>
<div class="b" style="left:465.00px;top:313.50px;width:7.00px;height:0.80px;background:#888"></div>
<div class="b" style="left:465.00px;top:316.00px;width:7.00px;height:0.80px;background:#888"></div>
<div class="b" style="left:465.00px;top:318.50px;width:7.00px;height:0.80px;background:#888"></div>
<svg class="b" style="left:465.5px;top:276.5px" width="7" height="4"><path d="M0 4 L3.5 0.5 L7 4Z" fill="#444"/></svg>
<svg class="b" style="left:465.5px;top:384.5px" width="7" height="4"><path d="M0 0 L3.5 3.5 L7 0Z" fill="#444"/></svg>
<div class="b" style="left:287.30px;top:307.90px;width:173.40px;height:12.30px;background:#3399ff"></div>
<div class="b" style="left:275.00px;top:272.60px;width:11.00px;height:10.80px;background:linear-gradient(135deg,#d9d9d9,#f5f5f5);border:1px solid #c2c6cb"></div>
<svg class="b" style="left:275.30px;top:272.40px" width="11" height="11" viewBox="0 0 11 11"><path d="M2.7 4.4 L5.2 7.3 L9.1 1.6" fill="none" stroke="#2b3f82" stroke-width="1.2" stroke-linecap="round" stroke-linejoin="round"/></svg>
<div class="b" style="left:275.00px;top:284.95px;width:11.00px;height:10.80px;background:linear-gradient(135deg,#d9d9d9,#f5f5f5);border:1px solid #c2c6cb"></div>
<svg class="b" style="left:275.30px;top:284.75px" width="11" height="11" viewBox="0 0 11 11"><path d="M2.7 4.4 L5.2 7.3 L9.1 1.6" fill="none" stroke="#2b3f82" stroke-width="1.2" stroke-linecap="round" stroke-linejoin="round"/></svg>
<div class="b" style="left:275.00px;top:297.30px;width:11.00px;height:10.80px;background:linear-gradient(135deg,#d9d9d9,#f5f5f5);border:1px solid #c2c6cb"></div>
<svg class="b" style="left:275.30px;top:297.10px" width="11" height="11" viewBox="0 0 11 11"><path d="M2.7 4.4 L5.2 7.3 L9.1 1.6" fill="none" stroke="#2b3f82" stroke-width="1.2" stroke-linecap="round" stroke-linejoin="round"/></svg>
<div class="b" style="left:275.00px;top:309.65px;width:11.00px;height:10.80px;background:linear-gradient(135deg,#d9d9d9,#f5f5f5);border:1px solid #c2c6cb"></div>
<svg class="b" style="left:275.30px;top:309.45px" width="11" height="11" viewBox="0 0 11 11"><path d="M2.7 4.4 L5.2 7.3 L9.1 1.6" fill="none" stroke="#2b3f82" stroke-width="1.2" stroke-linecap="round" stroke-linejoin="round"/></svg>
<div class="b" style="left:275.00px;top:322.00px;width:11.00px;height:10.80px;background:linear-gradient(135deg,#d9d9d9,#f5f5f5);border:1px solid #c2c6cb"></div>
<div class="b" style="left:275.00px;top:334.35px;width:11.00px;height:10.80px;background:linear-gradient(135deg,#d9d9d9,#f5f5f5);border:1px solid #c2c6cb"></div>
<div class="b" style="left:275.00px;top:346.70px;width:11.00px;height:10.80px;background:linear-gradient(135deg,#d9d9d9,#f5f5f5);border:1px solid #c2c6cb"></div>
<div class="b" style="left:275.00px;top:359.05px;width:11.00px;height:10.80px;background:linear-gradient(135deg,#d9d9d9,#f5f5f5);border:1px solid #c2c6cb"></div>
<div class="b" style="left:275.00px;top:371.40px;width:11.00px;height:10.80px;background:linear-gradient(135deg,#d9d9d9,#f5f5f5);border:1px solid #c2c6cb"></div>
<div class="b" style="left:275.00px;top:383.75px;width:11.00px;height:10.80px;background:linear-gradient(135deg,#d9d9d9,#f5f5f5);border:1px solid #c2c6cb"></div>
<div class="b" style="left:336.00px;top:406.00px;width:65.40px;height:21.00px;background:linear-gradient(#f3f6f9 0%,#e9eef3 50%,#dde5ec 51%,#d6dfe7 100%);border:1px solid #5b9bc9;border-radius:3px;box-shadow:inset 0 0 0 1px #cdeafa"></div>
<div class="b" style="left:410.60px;top:406.00px;width:66.10px;height:21.00px;background:linear-gradient(#f4f4f4 0%,#eeeeee 50%,#e3e3e3 51%,#dadada 100%);border:1px solid #adadad;border-radius:3px"></div>
<div class="b" style="left:274.20px;top:223.60px;width:5.30px;height:0.90px;background:#666"></div>
<div class="b" style="left:382.30px;top:202.30px;width:5.20px;height:0.90px;background:#666"></div>
<div class="b" style="left:283.00px;top:265.30px;width:5.30px;height:0.90px;background:#666"></div>
<div class="a" style="top:165.84px;font-size:12px;line-height:12px;color:#1a1a1a;left:268.50px;transform:scaleX(0.8457);transform-origin:0 0;">Protect Sheet</div>
<div class="a" style="top:193.66px;font-size:9.5px;line-height:9.5px;color:#333;left:289.20px;transform:scaleX(0.9545);transform-origin:0 0;">Protect worksheet and contents of locked cells</div>
<div class="a" style="top:215.66px;font-size:9.5px;line-height:9.5px;color:#333;left:274.20px;transform:scaleX(0.9549);transform-origin:0 0;">Password to unprotect sheet:</div>
<div class="a" style="top:256.96px;font-size:9.5px;line-height:9.5px;color:#333;left:274.20px;transform:scaleX(0.9639);transform-origin:0 0;">Allow all users of this worksheet to:</div>
<div class="a" style="top:273.36px;font-size:9.5px;line-height:9.5px;color:#333;left:289.20px;transform:scaleX(0.9440);transform-origin:0 0;">Select locked cells</div>
<div class="a" style="top:285.71px;font-size:9.5px;line-height:9.5px;color:#333;left:289.20px;transform:scaleX(0.9440);transform-origin:0 0;">Select unlocked cells</div>
<div class="a" style="top:298.06px;font-size:9.5px;line-height:9.5px;color:#333;left:289.20px;transform:scaleX(0.9440);transform-origin:0 0;">Format cells</div>
<div class="a" style="top:310.41px;font-size:9.5px;line-height:9.5px;color:#fff;left:289.20px;transform:scaleX(0.9440);transform-origin:0 0;">Format columns</div>
<div class="a" style="top:322.76px;font-size:9.5px;line-height:9.5px;color:#333;left:289.20px;transform:scaleX(0.9440);transform-origin:0 0;">Format rows</div>
<div class="a" style="top:335.11px;font-size:9.5px;line-height:9.5px;color:#333;left:289.20px;transform:scaleX(0.9440);transform-origin:0 0;">Insert columns</div>
<div class="a" style="top:347.46px;font-size:9.5px;line-height:9.5px;color:#333;left:289.20px;transform:scaleX(0.9440);transform-origin:0 0;">Insert rows</div>
<div class="a" style="top:359.81px;font-size:9.5px;line-height:9.5px;color:#333;left:289.20px;transform:scaleX(0.9440);transform-origin:0 0;">Insert hyperlinks</div>
<div class="a" style="top:372.16px;font-size:9.5px;line-height:9.5px;color:#333;left:289.20px;transform:scaleX(0.9440);transform-origin:0 0;">Delete columns</div>
<div class="a" style="top:384.51px;font-size:9.5px;line-height:9.5px;color:#333;left:289.20px;transform:scaleX(0.9440);transform-origin:0 0;">Delete rows</div>
<div class="a" style="top:412.16px;font-size:9.5px;line-height:9.5px;color:#333;left:363.00px;transform:scaleX(0.8883);transform-origin:0 0;">OK</div>
<div class="a" style="top:412.16px;font-size:9.5px;line-height:9.5px;color:#333;left:429.80px;transform:scaleX(0.9162);transform-origin:0 0;">Cancel</div>
</body></html>
